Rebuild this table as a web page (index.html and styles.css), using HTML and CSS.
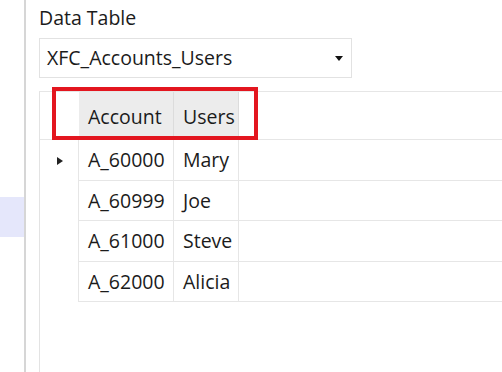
FILE: index.html
```html
<!DOCTYPE html>
<html lang="en">
<head>
<meta charset="utf-8">
<title>Data Table</title>
<link rel="stylesheet" href="styles.css">
</head>
<body>
<div class="app">
  <aside class="sidebar">
    <div class="nav-item active"></div>
  </aside>
  <main class="panel">
    <div class="label">Data Table</div>
    <div class="select">
      <span class="select-text">XFC_Accounts_Users</span>
      <svg class="caret" width="8" height="5" viewBox="0 0 8 5"><path d="M0 0H8L4 5Z" fill="#111"/></svg>
    </div>
    <div class="grid">
      <div class="highlight"></div>
      <div class="row header">
        <div class="cell rowhead"></div>
        <div class="cell colhead">Account</div>
        <div class="cell colhead">Users</div>
        <div class="cell filler"></div>
      </div>
      <div class="row data tall">
        <div class="cell rowhead"><svg class="pointer" width="6" height="8" viewBox="0 0 6 8"><path d="M0 0L6 4L0 8Z" fill="#222"/></svg></div>
        <div class="cell">A_60000</div>
        <div class="cell">Mary</div>
        <div class="cell filler"></div>
      </div>
      <div class="row data">
        <div class="cell rowhead"></div>
        <div class="cell">A_60999</div>
        <div class="cell">Joe</div>
        <div class="cell filler"></div>
      </div>
      <div class="row data tall">
        <div class="cell rowhead"></div>
        <div class="cell">A_61000</div>
        <div class="cell">Steve</div>
        <div class="cell filler"></div>
      </div>
      <div class="row data">
        <div class="cell rowhead"></div>
        <div class="cell">A_62000</div>
        <div class="cell">Alicia</div>
        <div class="cell filler"></div>
      </div>
    </div>
  </main>
</div>
</body>
</html>
```
FILE: styles.css
```css
html, body {
  margin: 0;
  padding: 0;
  background: #ffffff;
  overflow: hidden;
}
body {
  font-family: "Open Sans", "Noto Sans", sans-serif;
  font-size: 19.5px;
  color: #1b1b1b;
}
.app {
  display: flex;
  height: 100vh;
}
.sidebar {
  width: 24px;
  flex: 0 0 24px;
  border-right: 2px solid #d6d6d6;
}
.nav-item.active {
  margin-top: 197px;
  height: 40px;
  background: #e5e7fb;
}
.panel {
  flex: 1;
  min-width: 0;
  display: flex;
  flex-direction: column;
  padding: 5px 0 0 13px;
  overflow: hidden;
}
.label {
  line-height: 26px;
  height: 26px;
  white-space: nowrap;
}
.select {
  margin-top: 7px;
  box-sizing: border-box;
  width: 313px;
  height: 40px;
  border: 1px solid #e2e2e2;
  display: flex;
  align-items: center;
  justify-content: space-between;
  padding: 0 8px 0 7px;
  line-height: 26px;
}
.caret {
  display: block;
  margin-top: 1px;
}
.grid {
  position: relative;
  margin-top: 13px;
  flex: 1;
  border-top: 1px solid #e6e6e6;
  border-left: 1px solid #e3e3e3;
}
.row {
  display: grid;
  grid-template-columns: 39px 95px 65px 1fr;
}
.row.header {
  height: 48px;
  border-bottom: 1px solid #e6e6e6;
  box-sizing: border-box;
}
.cell {
  box-sizing: border-box;
  display: flex;
  align-items: center;
  padding: 0 8px 0 9px;
  line-height: 26px;
  white-space: nowrap;
}
.header .cell {
  padding-top: 2px;
}
.colhead {
  background: #ececec;
  border-right: 1px solid #dcdcdc;
}
.data .cell {
  height: 40px;
  border-bottom: 1px solid #e6e6e6;
  border-right: 1px solid #e6e6e6;
}
.data.tall .cell {
  height: 41px;
}
.data .cell.filler {
  border-right: none;
}
.data .cell.rowhead {
  border-bottom: none;
  justify-content: center;
  padding: 0;
}
.pointer {
  display: block;
  margin-left: 1px;
}
.highlight {
  position: absolute;
  left: 12px;
  top: -5px;
  width: 206px;
  height: 53px;
  box-sizing: border-box;
  border: 4px solid #e3161f;
  z-index: 2;
}
```
